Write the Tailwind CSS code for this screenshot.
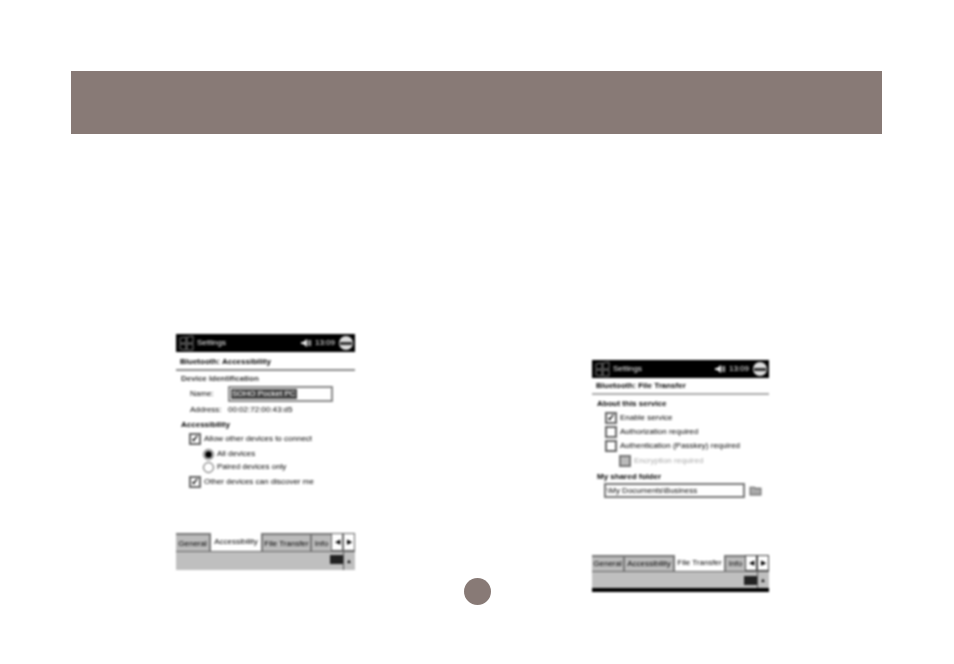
<!DOCTYPE html>
<html lang="en">
<head>
  <meta charset="UTF-8" />
  <title>Bluetooth Settings</title>
  <script src="https://cdn.jsdelivr.net/npm/@tailwindcss/browser@4"></script>
</head>
<body class="bg-white">
  <div class="relative w-[954px] h-[664px] overflow-hidden font-['Liberation_Sans',sans-serif] text-[8px] leading-[10px] text-black">
    <!-- header band -->
    <div class="ml-[71px] mt-[71px] w-[811px] h-[63px] bg-[#887a76]"></div>

    <div class="flex items-start pl-[176px] pt-[200px]">
      <!-- left device: accessibility -->
      <div class="w-[179px] h-[236px] flex flex-col bg-white blur-[0.9px]">
        <div class="h-[18px] bg-black flex items-center text-[#eee] pl-[2px] pr-[2px]">
          <svg class="w-[17px] h-[16px]" viewBox="0 0 17 16" fill="none" stroke="#777" stroke-width="1"><path d="M2 3 L8 2 V8 L2 8 Z M9 2 L15 1 V8 H9 Z M2 9 H8 V15 L2 14 Z M9 9 H15 V15 L9 15 Z" /></svg>
          <span class="ml-[2px]">Settings</span>
          <svg class="ml-auto w-[10px] h-[8px]" viewBox="0 0 10 8" fill="#eee"><path d="M0 3H2L6 0V8L2 5H0Z" /><path d="M7.5 1V7M9.5 1V7" stroke="#eee" stroke-width="1" /></svg>
          <span class="ml-[4px] mr-[4px]">13:09</span>
          <div class="w-[14px] h-[14px] rounded-full bg-[#ddd] flex items-center justify-center"><div class="w-[12px] h-[3px] bg-[#333]"></div></div>
        </div>
        <div class="h-[19px] flex items-center pl-[4px] pt-[2px] font-bold border-b-2 border-[#888]">Bluetooth: Accessibility</div>
        <div class="pl-[5px] mt-[3px] h-[10px] font-bold text-[#333]">Device Identification</div>
        <div class="flex items-center h-[16px] mt-[2px] pl-[14px]">
          <span class="w-[38px]">Name:</span>
          <div class="w-[105px] h-[16px] border-2 border-[#888] p-[1px] flex"><span class="w-[66px] bg-[#444] text-white whitespace-nowrap overflow-hidden pl-[1px] leading-[10px]">SOHO Pocket PC</span></div>
        </div>
        <div class="flex items-center h-[10px] mt-[3px] pl-[14px]">
          <span class="w-[38px]">Address:</span><span>00:02:72:00:43:d5</span>
        </div>
        <div class="pl-[5px] mt-[5px] h-[10px] font-bold">Accessibility</div>
        <div class="flex items-center h-[12px] mt-[3px] pl-[13px]">
          <div class="w-[12px] h-[12px] border-2 border-[#666] flex items-center justify-center text-[10px] font-bold">✓</div><span class="ml-[3px]">Allow other devices to connect</span>
        </div>
        <div class="flex items-center h-[12px] mt-[3px] pl-[27px]">
          <div class="w-[11px] h-[11px] rounded-full border border-[#444] flex items-center justify-center"><div class="w-[7px] h-[7px] rounded-full bg-black"></div></div><span class="ml-[3px]">All devices</span>
        </div>
        <div class="flex items-center h-[12px] mt-[1px] pl-[27px]">
          <div class="w-[11px] h-[11px] rounded-full border border-[#555]"></div><span class="ml-[3px]">Paired devices only</span>
        </div>
        <div class="flex items-center h-[12px] mt-[3px] pl-[13px]">
          <div class="w-[12px] h-[12px] border-2 border-[#666] flex items-center justify-center text-[10px] font-bold">✓</div><span class="ml-[3px]">Other devices can discover me</span>
        </div>
        <div class="mt-auto flex h-[19px] bg-[#bbb] border-b border-[#666] items-stretch text-center">
          <div class="w-[35px] border-r-2 border-t-2 border-[#777] leading-[18px]">General</div>
          <div class="w-[50px] bg-white leading-[18px]">Accessibility</div>
          <div class="w-[51px] border-x-2 border-t-2 border-[#777] leading-[18px]">File Transfer</div>
          <div class="w-[19px] border-t-2 border-[#777] leading-[18px] overflow-hidden">Info</div>
          <div class="w-[12px] bg-white border border-[#666] leading-[16px] text-[7px]">◀</div>
          <div class="w-[12px] bg-white border border-[#666] leading-[16px] text-[7px]">▶</div>
        </div>
        <div class="h-[18px] bg-[#bfbfbf] flex items-center justify-end pr-[2px]">
          <div class="w-[13px] h-[9px] bg-[#222] -mt-[3px]"></div><div class="w-[1px] h-[18px] bg-[#555]"></div><span class="ml-[1px] w-[8px] text-[6px] text-center">▲</span>
        </div>
      </div>

      <!-- right device: file transfer -->
      <div class="w-[177px] h-[232px] ml-[237px] mt-[26px] flex flex-col bg-white blur-[0.9px]">
        <div class="h-[18px] bg-black flex items-center text-[#eee] pl-[2px] pr-[2px]">
          <svg class="w-[17px] h-[16px]" viewBox="0 0 17 16" fill="none" stroke="#777" stroke-width="1"><path d="M2 3 L8 2 V8 L2 8 Z M9 2 L15 1 V8 H9 Z M2 9 H8 V15 L2 14 Z M9 9 H15 V15 L9 15 Z" /></svg>
          <span class="ml-[2px]">Settings</span>
          <svg class="ml-auto w-[10px] h-[8px]" viewBox="0 0 10 8" fill="#eee"><path d="M0 3H2L6 0V8L2 5H0Z" /><path d="M7.5 1V7M9.5 1V7" stroke="#eee" stroke-width="1" /></svg>
          <span class="ml-[4px] mr-[4px]">13:09</span>
          <div class="w-[14px] h-[14px] rounded-full bg-[#ddd] flex items-center justify-center"><div class="w-[12px] h-[3px] bg-[#333]"></div></div>
        </div>
        <div class="h-[17px] flex items-center pl-[4px] font-bold border-b-2 border-[#aaa]">Bluetooth: File Transfer</div>
        <div class="pl-[5px] mt-[4px] h-[10px] font-bold">About this service</div>
        <div class="flex items-center h-[12px] mt-[3px] pl-[13px]">
          <div class="w-[12px] h-[12px] border-2 border-[#666] flex items-center justify-center text-[10px] font-bold">✓</div><span class="ml-[3px]">Enable service</span>
        </div>
        <div class="flex items-center h-[12px] mt-[2px] pl-[13px]">
          <div class="w-[12px] h-[12px] border-2 border-[#666]"></div><span class="ml-[3px]">Authorization required</span>
        </div>
        <div class="flex items-center h-[12px] mt-[2px] pl-[13px]">
          <div class="w-[12px] h-[12px] border-2 border-[#666]"></div><span class="ml-[3px]">Authentication (Passkey) required</span>
        </div>
        <div class="flex items-center h-[12px] mt-[3px] pl-[27px]">
          <div class="w-[12px] h-[12px] border-2 border-[#777] bg-[#bbb]"></div><span class="ml-[3px] text-[#aaa]">Encryption required</span>
        </div>
        <div class="pl-[5px] mt-[5px] h-[10px] font-bold">My shared folder</div>
        <div class="flex items-center h-[15px] mt-[1px] pl-[12px]">
          <div class="w-[141px] h-[15px] border-2 border-[#777] pl-[1px] leading-[11px]">\My Documents\Business</div>
          <svg class="ml-[4px] w-[13px] h-[11px]" viewBox="0 0 12 10" fill="#aaa" stroke="#666" stroke-width="1"><path d="M1 2H5L6 3H11V9H1Z" /></svg>
        </div>
        <div class="mt-auto flex h-[17px] bg-[#bbb] border-b border-[#666] items-stretch text-center">
          <div class="w-[33px] border-r-2 border-t-2 border-[#777] leading-[14px]">General</div>
          <div class="w-[50px] border-r-2 border-t-2 border-[#777] leading-[14px]">Accessibility</div>
          <div class="w-[49px] bg-white leading-[16px]">File Transfer</div>
          <div class="w-[21px] border-t-2 border-l-2 border-[#777] leading-[14px] overflow-hidden">Info</div>
          <div class="w-[12px] bg-white border border-[#444] leading-[14px] text-[7px]">◀</div>
          <div class="w-[12px] bg-white border border-[#444] leading-[14px] text-[7px]">▶</div>
        </div>
        <div class="h-[16px] bg-[#bfbfbf] flex items-center justify-end pr-[2px]">
          <div class="w-[13px] h-[9px] bg-[#222]"></div><div class="w-[1px] h-[16px] bg-[#555]"></div><span class="ml-[1px] w-[8px] text-[6px] text-center">▲</span>
        </div>
        <div class="h-[4px] bg-black"></div>
      </div>
    </div>

    <!-- page number dot -->
    <div class="absolute left-[464px] top-[578px] w-[27px] h-[27px] rounded-full bg-[#887a76]"></div>
  </div>
</body>
</html>
